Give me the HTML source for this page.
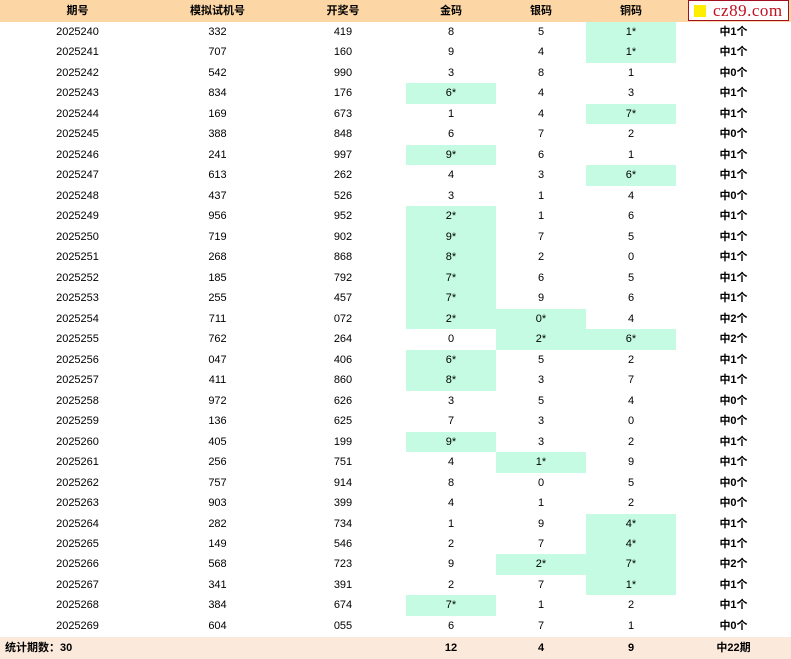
<!DOCTYPE html>
<html><head><meta charset="utf-8"><style>
body{margin:0;width:791px;height:659px;background:#fff;font-family:"Liberation Sans","Noto Sans CJK SC",sans-serif;font-size:11px;color:#000;position:relative;overflow:hidden}
.r{position:absolute;left:0;width:791px;display:flex}
.r div{text-align:center;box-sizing:border-box}
.c1{width:155px}.c2{width:125px}.c3{width:126px}.c4,.c5,.c6{width:90px}.c7{width:115px}
.h{background:#c4fbe2}
.hd{top:0;height:22px;line-height:22px;background:#fcd6a4;font-weight:bold}
.ft{top:637px;height:22px;line-height:22px;background:#fbe9dc;font-weight:bold}
.b{font-weight:bold}
#logo{position:absolute;left:688px;top:0;width:101px;height:21px;background:#fff;border:1px solid #a01020;box-sizing:border-box;font-family:"Liberation Serif",serif;font-size:17px;color:#c01020;line-height:19px;padding-left:24px;letter-spacing:0.5px}
#logo i{position:absolute;left:5px;top:4px;width:12px;height:12px;background:#ffee00}
</style></head><body>
<div class="r hd"><div class="c1">期号</div><div class="c2">模拟试机号</div><div class="c3">开奖号</div><div class="c4">金码</div><div class="c5">银码</div><div class="c6">铜码</div><div class="c7"></div></div>
<div id="logo"><i></i>cz89.com</div>
<div id="rows"></div>
<div class="r ft"><div class="c1" style="text-align:left;padding-left:5px">统计期数：30</div><div class="c2"></div><div class="c3"></div><div class="c4">12</div><div class="c5">4</div><div class="c6">9</div><div class="c7">中22期</div></div>
<div style="position:absolute;top:22px;left:0">
<div class="r" style="top:0.0px;height:20.48px;line-height:20.48px"><div class="c1">2025240</div><div class="c2">332</div><div class="c3">419</div><div class="c4">8</div><div class="c5">5</div><div class="c6 h">1*</div><div class="c7 b">中1个</div></div>
<div class="r" style="top:20.48px;height:20.48px;line-height:20.48px"><div class="c1">2025241</div><div class="c2">707</div><div class="c3">160</div><div class="c4">9</div><div class="c5">4</div><div class="c6 h">1*</div><div class="c7 b">中1个</div></div>
<div class="r" style="top:40.96px;height:20.48px;line-height:20.48px"><div class="c1">2025242</div><div class="c2">542</div><div class="c3">990</div><div class="c4">3</div><div class="c5">8</div><div class="c6">1</div><div class="c7 b">中0个</div></div>
<div class="r" style="top:61.44px;height:20.48px;line-height:20.48px"><div class="c1">2025243</div><div class="c2">834</div><div class="c3">176</div><div class="c4 h">6*</div><div class="c5">4</div><div class="c6">3</div><div class="c7 b">中1个</div></div>
<div class="r" style="top:81.92px;height:20.48px;line-height:20.48px"><div class="c1">2025244</div><div class="c2">169</div><div class="c3">673</div><div class="c4">1</div><div class="c5">4</div><div class="c6 h">7*</div><div class="c7 b">中1个</div></div>
<div class="r" style="top:102.4px;height:20.48px;line-height:20.48px"><div class="c1">2025245</div><div class="c2">388</div><div class="c3">848</div><div class="c4">6</div><div class="c5">7</div><div class="c6">2</div><div class="c7 b">中0个</div></div>
<div class="r" style="top:122.88px;height:20.48px;line-height:20.48px"><div class="c1">2025246</div><div class="c2">241</div><div class="c3">997</div><div class="c4 h">9*</div><div class="c5">6</div><div class="c6">1</div><div class="c7 b">中1个</div></div>
<div class="r" style="top:143.36px;height:20.48px;line-height:20.48px"><div class="c1">2025247</div><div class="c2">613</div><div class="c3">262</div><div class="c4">4</div><div class="c5">3</div><div class="c6 h">6*</div><div class="c7 b">中1个</div></div>
<div class="r" style="top:163.84px;height:20.48px;line-height:20.48px"><div class="c1">2025248</div><div class="c2">437</div><div class="c3">526</div><div class="c4">3</div><div class="c5">1</div><div class="c6">4</div><div class="c7 b">中0个</div></div>
<div class="r" style="top:184.32px;height:20.48px;line-height:20.48px"><div class="c1">2025249</div><div class="c2">956</div><div class="c3">952</div><div class="c4 h">2*</div><div class="c5">1</div><div class="c6">6</div><div class="c7 b">中1个</div></div>
<div class="r" style="top:204.8px;height:20.48px;line-height:20.48px"><div class="c1">2025250</div><div class="c2">719</div><div class="c3">902</div><div class="c4 h">9*</div><div class="c5">7</div><div class="c6">5</div><div class="c7 b">中1个</div></div>
<div class="r" style="top:225.28px;height:20.48px;line-height:20.48px"><div class="c1">2025251</div><div class="c2">268</div><div class="c3">868</div><div class="c4 h">8*</div><div class="c5">2</div><div class="c6">0</div><div class="c7 b">中1个</div></div>
<div class="r" style="top:245.76px;height:20.48px;line-height:20.48px"><div class="c1">2025252</div><div class="c2">185</div><div class="c3">792</div><div class="c4 h">7*</div><div class="c5">6</div><div class="c6">5</div><div class="c7 b">中1个</div></div>
<div class="r" style="top:266.24px;height:20.48px;line-height:20.48px"><div class="c1">2025253</div><div class="c2">255</div><div class="c3">457</div><div class="c4 h">7*</div><div class="c5">9</div><div class="c6">6</div><div class="c7 b">中1个</div></div>
<div class="r" style="top:286.72px;height:20.48px;line-height:20.48px"><div class="c1">2025254</div><div class="c2">711</div><div class="c3">072</div><div class="c4 h">2*</div><div class="c5 h">0*</div><div class="c6">4</div><div class="c7 b">中2个</div></div>
<div class="r" style="top:307.2px;height:20.48px;line-height:20.48px"><div class="c1">2025255</div><div class="c2">762</div><div class="c3">264</div><div class="c4">0</div><div class="c5 h">2*</div><div class="c6 h">6*</div><div class="c7 b">中2个</div></div>
<div class="r" style="top:327.68px;height:20.48px;line-height:20.48px"><div class="c1">2025256</div><div class="c2">047</div><div class="c3">406</div><div class="c4 h">6*</div><div class="c5">5</div><div class="c6">2</div><div class="c7 b">中1个</div></div>
<div class="r" style="top:348.16px;height:20.48px;line-height:20.48px"><div class="c1">2025257</div><div class="c2">411</div><div class="c3">860</div><div class="c4 h">8*</div><div class="c5">3</div><div class="c6">7</div><div class="c7 b">中1个</div></div>
<div class="r" style="top:368.64px;height:20.48px;line-height:20.48px"><div class="c1">2025258</div><div class="c2">972</div><div class="c3">626</div><div class="c4">3</div><div class="c5">5</div><div class="c6">4</div><div class="c7 b">中0个</div></div>
<div class="r" style="top:389.12px;height:20.48px;line-height:20.48px"><div class="c1">2025259</div><div class="c2">136</div><div class="c3">625</div><div class="c4">7</div><div class="c5">3</div><div class="c6">0</div><div class="c7 b">中0个</div></div>
<div class="r" style="top:409.6px;height:20.48px;line-height:20.48px"><div class="c1">2025260</div><div class="c2">405</div><div class="c3">199</div><div class="c4 h">9*</div><div class="c5">3</div><div class="c6">2</div><div class="c7 b">中1个</div></div>
<div class="r" style="top:430.08px;height:20.48px;line-height:20.48px"><div class="c1">2025261</div><div class="c2">256</div><div class="c3">751</div><div class="c4">4</div><div class="c5 h">1*</div><div class="c6">9</div><div class="c7 b">中1个</div></div>
<div class="r" style="top:450.56px;height:20.48px;line-height:20.48px"><div class="c1">2025262</div><div class="c2">757</div><div class="c3">914</div><div class="c4">8</div><div class="c5">0</div><div class="c6">5</div><div class="c7 b">中0个</div></div>
<div class="r" style="top:471.04px;height:20.48px;line-height:20.48px"><div class="c1">2025263</div><div class="c2">903</div><div class="c3">399</div><div class="c4">4</div><div class="c5">1</div><div class="c6">2</div><div class="c7 b">中0个</div></div>
<div class="r" style="top:491.52px;height:20.48px;line-height:20.48px"><div class="c1">2025264</div><div class="c2">282</div><div class="c3">734</div><div class="c4">1</div><div class="c5">9</div><div class="c6 h">4*</div><div class="c7 b">中1个</div></div>
<div class="r" style="top:512.0px;height:20.48px;line-height:20.48px"><div class="c1">2025265</div><div class="c2">149</div><div class="c3">546</div><div class="c4">2</div><div class="c5">7</div><div class="c6 h">4*</div><div class="c7 b">中1个</div></div>
<div class="r" style="top:532.48px;height:20.48px;line-height:20.48px"><div class="c1">2025266</div><div class="c2">568</div><div class="c3">723</div><div class="c4">9</div><div class="c5 h">2*</div><div class="c6 h">7*</div><div class="c7 b">中2个</div></div>
<div class="r" style="top:552.96px;height:20.48px;line-height:20.48px"><div class="c1">2025267</div><div class="c2">341</div><div class="c3">391</div><div class="c4">2</div><div class="c5">7</div><div class="c6 h">1*</div><div class="c7 b">中1个</div></div>
<div class="r" style="top:573.44px;height:20.48px;line-height:20.48px"><div class="c1">2025268</div><div class="c2">384</div><div class="c3">674</div><div class="c4 h">7*</div><div class="c5">1</div><div class="c6">2</div><div class="c7 b">中1个</div></div>
<div class="r" style="top:593.92px;height:20.48px;line-height:20.48px"><div class="c1">2025269</div><div class="c2">604</div><div class="c3">055</div><div class="c4">6</div><div class="c5">7</div><div class="c6">1</div><div class="c7 b">中0个</div></div>
</div>
</body></html>
